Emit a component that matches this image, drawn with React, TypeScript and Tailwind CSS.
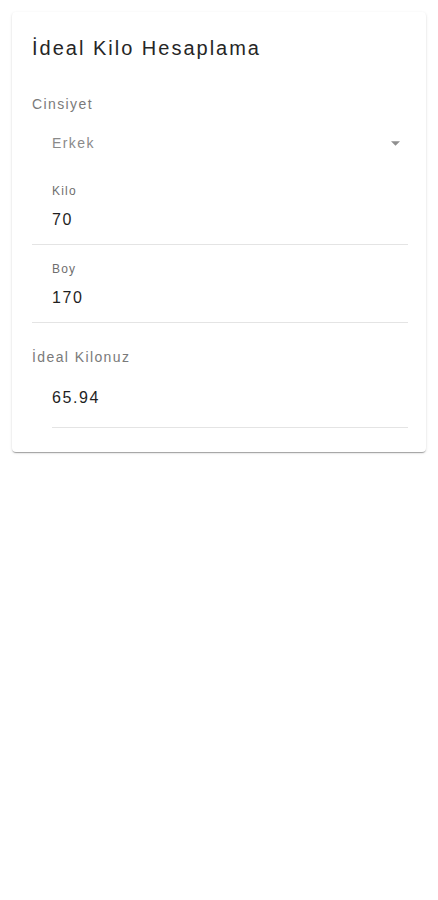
type FieldProps = {
  label: string;
  value: string;
  first?: boolean;
};

const NumberField = ({ label, value, first }: FieldProps) => {
  return (
    <div
      className={`${first ? "pt-[30px]" : "pt-[16px]"} pb-[12px] pl-[20px] border-b border-solid border-[#e4e4e4]`}
    >
      <div className="h-[16px] text-[12px] leading-[16px] tracking-[0.1em] text-[#6e6e6e]">
        {label}
      </div>
      <div className="mt-[9px] h-[24px] text-[16px] leading-[24px] tracking-[0.1em] text-[#1f1f1f]">
        {value}
      </div>
    </div>
  );
};

const App = () => {
  const gender = "Erkek";
  return (
    <div className="min-h-[900px] w-full bg-white pt-[12px] font-['Liberation_Sans',Arial,sans-serif]">
      <div className="ml-[12px] w-[414px] rounded-[4px] bg-white pt-[22px] pb-[24px] pl-[20px] pr-[18px] shadow-[0px_2px_1px_-1px_rgba(0,0,0,0.2),0px_1px_1px_0px_rgba(0,0,0,0.14),0px_1px_3px_0px_rgba(0,0,0,0.12)]">
        <h1 className="h-[28px] text-[20px] leading-[28px] font-normal tracking-[0.1em] text-[#262626]">
          İdeal Kilo Hesaplama
        </h1>

        <div className="mt-[32px] h-[20px] text-[14px] leading-[20px] tracking-[0.1em] text-[#7a7a7a]">
          Cinsiyet
        </div>
        <div className="mt-[19px] flex h-[20px] items-center justify-between pl-[20px] pr-[8px]">
          <span className="text-[14px] leading-[20px] tracking-[0.1em] text-[#8a8a8a]">
            {gender}
          </span>
          <svg width="9" height="5" viewBox="0 0 10 5" className="mt-[1px]">
            <path d="M0 0l5 5 5-5z" fill="#8f8f8f" />
          </svg>
        </div>

        <NumberField label="Kilo" value="70" first />
        <NumberField label="Boy" value="170" />

        <div className="mt-[24px] h-[20px] text-[14px] leading-[20px] tracking-[0.1em] text-[#7a7a7a]">
          İdeal Kilonuz
        </div>
        <div className="ml-[20px] mt-[19px] pb-[17px] border-b border-solid border-[#e4e4e4]">
          <div className="h-[24px] text-[16px] leading-[24px] tracking-[0.1em] text-[#1f1f1f]">
            65.94
          </div>
        </div>
      </div>
    </div>
  );
};

export default App;
